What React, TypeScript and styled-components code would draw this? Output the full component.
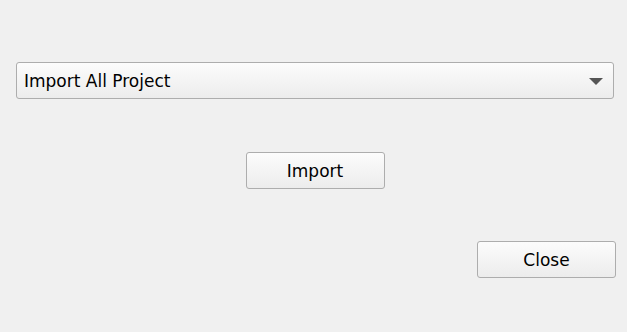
import React from 'react'
import styled, { createGlobalStyle } from 'styled-components'

const GlobalStyle = createGlobalStyle`
  html, body {
    margin: 0;
    padding: 0;
    background: #f0f0f0;
  }

  body {
    font-family: 'DejaVu Sans', 'Liberation Sans', sans-serif;
    color: #000;
  }
`

export default function App() {
	return (
		<>
			<GlobalStyle />
			<Dialog>
				<Combo>
					<ComboText>Import All Project</ComboText>
					<Arrow />
				</Combo>

				<CenterRow>
					<Button>Import</Button>
				</CenterRow>

				<RightRow>
					<Button>Close</Button>
				</RightRow>
			</Dialog>
		</>
	)
}

const Dialog = styled.div`
  width: 627px;
  height: 332px;
  box-sizing: border-box;
  padding: 62px 11px 0 16px;

  display: flex;
  flex-direction: column;
`

const Combo = styled.div`
  width: 598px;
  height: 37px;
  box-sizing: border-box;
  padding: 1px 10px 0 7px;

  display: flex;
  align-items: center;
  justify-content: space-between;

  border: 1px solid #adadad;
  border-radius: 3px;
  background: linear-gradient(#fcfcfc, #ececec);
`

const ComboText = styled.span`
  font-size: 17px;
`

const Arrow = styled.span`
  width: 0;
  height: 0;
  border-left: 7px solid transparent;
  border-right: 7px solid transparent;
  border-top: 7px solid #555;
`

const CenterRow = styled.div`
  margin-top: 53px;
  width: 598px;
  display: flex;
  justify-content: center;
`

const RightRow = styled.div`
  margin-top: 52px;
  display: flex;
  justify-content: flex-end;
`

const Button = styled.button`
  width: 139px;
  height: 37px;
  box-sizing: border-box;
  padding: 1px 0 0;

  font-family: inherit;
  font-size: 17px;
  color: #000;

  border: 1px solid #adadad;
  border-radius: 3px;
  background: linear-gradient(#fcfcfc, #ececec);
`
